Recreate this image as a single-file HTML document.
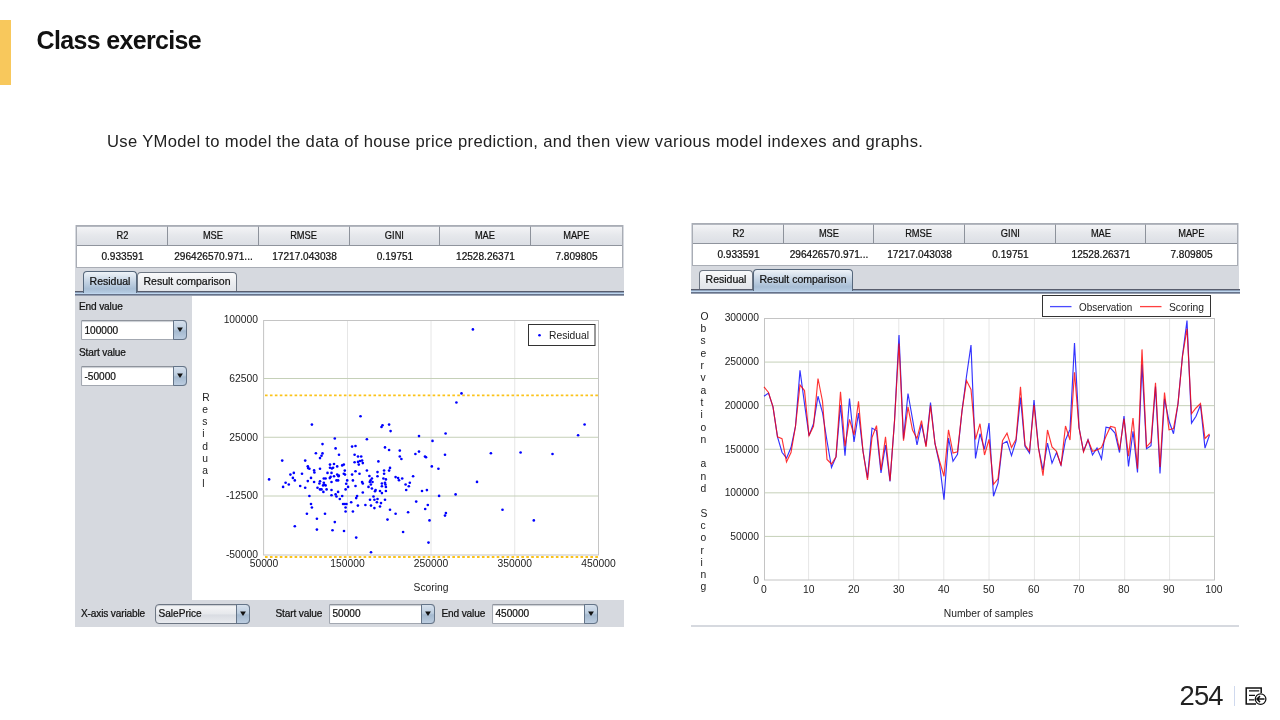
<!DOCTYPE html><html><head><meta charset="utf-8"><title>Class exercise</title><style>
*{box-sizing:border-box;margin:0;padding:0}
html,body{width:1280px;height:720px;overflow:hidden;background:#fff}
body{will-change:transform;position:relative;font-family:"Liberation Sans",sans-serif;color:#000}
.abs{position:absolute}
.vt{width:1px;font-size:10.3px;line-height:12.3px;white-space:break-spaces;word-break:break-all;line-break:anywhere;color:#222}
.bar{left:0;top:20px;width:11px;height:65px;background:#f8c85c}
.title{left:36.5px;top:23.5px;font-weight:bold;font-size:25px;line-height:32px;white-space:nowrap;color:#111;letter-spacing:-0.66px;word-spacing:0px}
.body{left:107px;top:131px;font-size:16.6px;line-height:22px;white-space:nowrap;color:#222;letter-spacing:0.333px}
.pnum{left:1179.5px;top:680.5px;font-size:27.4px;line-height:30px;color:#222;letter-spacing:-0.85px}
.panel{background:#d6d9df}
.lb{letter-spacing:-0.14px}
.sw{font-size:10.1px;line-height:12px;white-space:nowrap;color:#111;-webkit-text-stroke:0.22px #111}
.th{background:linear-gradient(#f3f4f6,#e6e8ec 45%,#dcdfe5);border-top:1px solid #b4b8c0;border-bottom:1px solid #8f949d;text-align:center;height:20px;padding-top:3px}
.td{background:#fff;text-align:center;height:21px;padding-top:4.5px}
.tab{font-size:10.5px;height:20px;border:1px solid #6d7683;border-bottom:none;border-radius:4px 4px 0 0;padding-top:4px;text-align:center;background:linear-gradient(#fafafb,#eceef1 50%,#e1e4e9)}
.tab.sel{background:linear-gradient(#eef3f8,#c5d4e4 45%,#a8bed5 80%,#b6cce3);border-color:#56677b;height:22px}
.combo{height:20px;border:1px solid #a3a8b1;border-top-color:#8e939c;border-radius:1px 4px 4px 1px;background:#fff;padding:3.5px 0 0 2.5px;box-shadow:inset 0 1px 1px #c8ccd2}
.cbtn{width:14px;height:20px;border:1px solid #647488;border-radius:0 4px 4px 0;background:linear-gradient(#d6e0ec,#bccddf 45%,#a4b9cf 55%,#bccde0)}
.combo.ne{background:linear-gradient(#f6f7f8,#e6e8ec 50%,#d9dce2 55%,#e8eaee);border-color:#6d7683;border-radius:4px}
</style></head><body>
<div class="abs bar"></div>
<div class="abs title">Class exercise</div>
<div class="abs body">Use YModel to model the data of house price prediction, and then view various model indexes and graphs.</div>
<div class="abs panel" style="left:75px;top:225px;width:549px;height:402px"></div>
<div class="abs" style="left:76px;top:225px;width:547px;height:43px;border:1px solid #a9adb5;background:#fff"></div>
<div class="abs sw th" style="left:77px;top:226px;width:91px;border-right:1px solid #8d929b;"><span style="display:inline-block;transform:scaleX(0.92)">R2</span></div>
<div class="abs sw td" style="left:77px;top:246px;width:91px">0.933591</div>
<div class="abs sw th" style="left:168px;top:226px;width:91px;border-right:1px solid #8d929b;"><span style="display:inline-block;transform:scaleX(0.92)">MSE</span></div>
<div class="abs sw td" style="left:168px;top:246px;width:91px">296426570.971...</div>
<div class="abs sw th" style="left:259px;top:226px;width:91px;border-right:1px solid #8d929b;"><span style="display:inline-block;transform:scaleX(0.92)">RMSE</span></div>
<div class="abs sw td" style="left:259px;top:246px;width:91px">17217.043038</div>
<div class="abs sw th" style="left:350px;top:226px;width:90px;border-right:1px solid #8d929b;"><span style="display:inline-block;transform:scaleX(0.92)">GINI</span></div>
<div class="abs sw td" style="left:350px;top:246px;width:90px">0.19751</div>
<div class="abs sw th" style="left:440px;top:226px;width:91px;border-right:1px solid #8d929b;"><span style="display:inline-block;transform:scaleX(0.92)">MAE</span></div>
<div class="abs sw td" style="left:440px;top:246px;width:91px">12528.26371</div>
<div class="abs sw th" style="left:531px;top:226px;width:91px;"><span style="display:inline-block;transform:scaleX(0.92)">MAPE</span></div>
<div class="abs sw td" style="left:531px;top:246px;width:91px">7.809805</div>
<div class="abs" style="left:75px;top:291px;width:549px;height:1px;background:#585d6d"></div>
<div class="abs" style="left:75px;top:292px;width:549px;height:1px;background:#8c9fb9"></div>
<div class="abs" style="left:75px;top:293px;width:549px;height:1px;background:#bfd6ee"></div>
<div class="abs" style="left:75px;top:294px;width:549px;height:1px;background:#66728a"></div>
<div class="abs" style="left:75px;top:295px;width:549px;height:1px;background:#969fb0"></div>
<div class="abs sw tab sel" style="left:83px;top:271px;width:54px;height:22px;padding-top:3.2px">Residual</div>
<div class="abs sw tab" style="left:137px;top:272px;width:100px;height:19px;padding-top:2.2px">Result comparison</div>
<div class="abs" style="left:192px;top:296px;width:432px;height:304px;background:#fff"></div>
<div class="abs sw lb" style="left:79px;top:301.2px">End value</div>
<div class="abs sw combo" style="left:81px;top:320px;width:106px;">100000</div><div class="abs cbtn" style="left:173px;top:320px"></div>
<div class="abs sw lb" style="left:79px;top:347.2px">Start value</div>
<div class="abs sw combo" style="left:81px;top:366px;width:106px;">-50000</div><div class="abs cbtn" style="left:173px;top:366px"></div>
<div class="abs sw lb" style="left:81px;top:608.2px">X-axis variable</div>
<div class="abs sw combo ne" style="left:155px;top:604px;width:95px;padding-top:2.8px;">SalePrice</div><div class="abs cbtn" style="left:236px;top:604px"></div>
<div class="abs sw lb" style="left:275.5px;top:608.2px">Start value</div>
<div class="abs sw combo" style="left:329px;top:604px;width:106px;padding-top:2.8px;">50000</div><div class="abs cbtn" style="left:421px;top:604px"></div>
<div class="abs sw lb" style="left:441.5px;top:608.2px">End value</div>
<div class="abs sw combo" style="left:492px;top:604px;width:106px;padding-top:2.8px;">450000</div><div class="abs cbtn" style="left:584px;top:604px"></div>
<div class="abs panel" style="left:691px;top:223px;width:548px;height:70px"></div>
<div class="abs" style="left:691px;top:625px;width:548px;height:2px;background:#d6d9df"></div>
<div class="abs" style="left:692px;top:223px;width:546px;height:43px;border:1px solid #a9adb5;background:#fff"></div>
<div class="abs sw th" style="left:693px;top:224px;width:91px;border-right:1px solid #8d929b;"><span style="display:inline-block;transform:scaleX(0.92)">R2</span></div>
<div class="abs sw td" style="left:693px;top:244px;width:91px">0.933591</div>
<div class="abs sw th" style="left:784px;top:224px;width:90px;border-right:1px solid #8d929b;"><span style="display:inline-block;transform:scaleX(0.92)">MSE</span></div>
<div class="abs sw td" style="left:784px;top:244px;width:90px">296426570.971...</div>
<div class="abs sw th" style="left:874px;top:224px;width:91px;border-right:1px solid #8d929b;"><span style="display:inline-block;transform:scaleX(0.92)">RMSE</span></div>
<div class="abs sw td" style="left:874px;top:244px;width:91px">17217.043038</div>
<div class="abs sw th" style="left:965px;top:224px;width:91px;border-right:1px solid #8d929b;"><span style="display:inline-block;transform:scaleX(0.92)">GINI</span></div>
<div class="abs sw td" style="left:965px;top:244px;width:91px">0.19751</div>
<div class="abs sw th" style="left:1056px;top:224px;width:90px;border-right:1px solid #8d929b;"><span style="display:inline-block;transform:scaleX(0.92)">MAE</span></div>
<div class="abs sw td" style="left:1056px;top:244px;width:90px">12528.26371</div>
<div class="abs sw th" style="left:1146px;top:224px;width:91px;"><span style="display:inline-block;transform:scaleX(0.92)">MAPE</span></div>
<div class="abs sw td" style="left:1146px;top:244px;width:91px">7.809805</div>
<div class="abs" style="left:691px;top:289px;width:549px;height:1px;background:#585d6d"></div>
<div class="abs" style="left:691px;top:290px;width:549px;height:1px;background:#8c9fb9"></div>
<div class="abs" style="left:691px;top:291px;width:549px;height:1px;background:#bfd6ee"></div>
<div class="abs" style="left:691px;top:292px;width:549px;height:1px;background:#66728a"></div>
<div class="abs" style="left:691px;top:293px;width:549px;height:1px;background:#969fb0"></div>
<div class="abs sw tab" style="left:699px;top:270px;width:54px;height:19px;padding-top:2.2px">Residual</div>
<div class="abs sw tab sel" style="left:753px;top:269px;width:100px;height:22px;padding-top:3.2px">Result comparison</div>
<svg class="abs" style="left:0;top:0" width="1280" height="720" viewBox="0 0 1280 720" font-family="Liberation Sans, sans-serif" font-size="10.3" fill="#222">
<line x1="347.5" y1="320.5" x2="347.5" y2="555" stroke="#e6e6e6" stroke-width="1"/>
<line x1="431" y1="320.5" x2="431" y2="555" stroke="#e6e6e6" stroke-width="1"/>
<line x1="514.75" y1="320.5" x2="514.75" y2="555" stroke="#e6e6e6" stroke-width="1"/>
<line x1="263.6" y1="378.5" x2="598.5" y2="378.5" stroke="#c5d0b8" stroke-width="1"/>
<line x1="263.6" y1="437.25" x2="598.5" y2="437.25" stroke="#c5d0b8" stroke-width="1"/>
<line x1="263.6" y1="496" x2="598.5" y2="496" stroke="#c5d0b8" stroke-width="1"/>
<rect x="263.6" y="320.5" width="334.9" height="234.5" fill="none" stroke="#c4c4c4" stroke-width="1"/>
<text x="258" y="323.0" text-anchor="end">100000</text>
<text x="258" y="381.8" text-anchor="end">62500</text>
<text x="258" y="440.6" text-anchor="end">25000</text>
<text x="258" y="499.3" text-anchor="end">-12500</text>
<text x="258" y="558.1" text-anchor="end">-50000</text>
<text x="264" y="567" text-anchor="middle">50000</text>
<text x="347.5" y="567" text-anchor="middle">150000</text>
<text x="431" y="567" text-anchor="middle">250000</text>
<text x="514.75" y="567" text-anchor="middle">350000</text>
<text x="598.5" y="567" text-anchor="middle">450000</text>
<text x="431" y="590.5" text-anchor="middle">Scoring</text>
<line x1="265" y1="395.4" x2="598.5" y2="395.4" stroke="#fbc31a" stroke-width="1.8" stroke-dasharray="2.6 2.33" stroke-linecap="butt"/>
<line x1="265" y1="557" x2="598.5" y2="557" stroke="#fbc31a" stroke-width="1.8" stroke-dasharray="2.6 2.33" stroke-linecap="butt"/>
<g fill="#0000ff">
<circle cx="360.5" cy="416.2" r="1.32"/>
<circle cx="311.9" cy="424.6" r="1.32"/>
<circle cx="382.5" cy="425.2" r="1.32"/>
<circle cx="381.5" cy="427.0" r="1.32"/>
<circle cx="389.1" cy="424.6" r="1.32"/>
<circle cx="390.6" cy="431.1" r="1.32"/>
<circle cx="419.0" cy="436.1" r="1.32"/>
<circle cx="334.8" cy="438.5" r="1.32"/>
<circle cx="366.9" cy="439.2" r="1.32"/>
<circle cx="322.5" cy="444.1" r="1.32"/>
<circle cx="352.1" cy="446.6" r="1.32"/>
<circle cx="355.5" cy="446.0" r="1.32"/>
<circle cx="335.6" cy="448.4" r="1.32"/>
<circle cx="385.0" cy="447.4" r="1.32"/>
<circle cx="389.1" cy="450.0" r="1.32"/>
<circle cx="399.8" cy="450.6" r="1.32"/>
<circle cx="419.0" cy="451.6" r="1.32"/>
<circle cx="415.4" cy="454.0" r="1.32"/>
<circle cx="315.9" cy="453.2" r="1.32"/>
<circle cx="322.5" cy="453.4" r="1.32"/>
<circle cx="321.5" cy="455.8" r="1.32"/>
<circle cx="320.0" cy="458.1" r="1.32"/>
<circle cx="339.0" cy="454.8" r="1.32"/>
<circle cx="354.6" cy="454.8" r="1.32"/>
<circle cx="358.0" cy="456.5" r="1.32"/>
<circle cx="361.2" cy="456.5" r="1.32"/>
<circle cx="399.8" cy="456.5" r="1.32"/>
<circle cx="401.4" cy="459.0" r="1.32"/>
<circle cx="282.2" cy="460.6" r="1.32"/>
<circle cx="305.2" cy="460.6" r="1.32"/>
<circle cx="354.6" cy="462.2" r="1.32"/>
<circle cx="358.0" cy="461.9" r="1.32"/>
<circle cx="360.0" cy="461.0" r="1.32"/>
<circle cx="362.1" cy="460.6" r="1.32"/>
<circle cx="362.8" cy="463.1" r="1.32"/>
<circle cx="358.8" cy="464.6" r="1.32"/>
<circle cx="378.4" cy="461.4" r="1.32"/>
<circle cx="330.0" cy="464.6" r="1.32"/>
<circle cx="334.0" cy="464.0" r="1.32"/>
<circle cx="337.2" cy="466.4" r="1.32"/>
<circle cx="342.2" cy="465.4" r="1.32"/>
<circle cx="343.8" cy="464.6" r="1.32"/>
<circle cx="307.8" cy="466.2" r="1.32"/>
<circle cx="308.1" cy="468.1" r="1.32"/>
<circle cx="309.4" cy="468.8" r="1.32"/>
<circle cx="330.0" cy="467.8" r="1.32"/>
<circle cx="331.9" cy="468.5" r="1.32"/>
<circle cx="333.1" cy="467.8" r="1.32"/>
<circle cx="320.0" cy="468.8" r="1.32"/>
<circle cx="314.1" cy="470.4" r="1.32"/>
<circle cx="314.4" cy="472.5" r="1.32"/>
<circle cx="390.0" cy="467.9" r="1.32"/>
<circle cx="389.1" cy="470.6" r="1.32"/>
<circle cx="384.1" cy="470.5" r="1.32"/>
<circle cx="366.9" cy="470.5" r="1.32"/>
<circle cx="355.5" cy="471.2" r="1.32"/>
<circle cx="344.8" cy="470.6" r="1.32"/>
<circle cx="293.8" cy="472.9" r="1.32"/>
<circle cx="290.4" cy="474.6" r="1.32"/>
<circle cx="302.0" cy="473.8" r="1.32"/>
<circle cx="327.5" cy="472.9" r="1.32"/>
<circle cx="331.5" cy="472.9" r="1.32"/>
<circle cx="337.2" cy="474.6" r="1.32"/>
<circle cx="338.8" cy="475.6" r="1.32"/>
<circle cx="338.5" cy="476.2" r="1.32"/>
<circle cx="343.8" cy="473.8" r="1.32"/>
<circle cx="345.0" cy="474.6" r="1.32"/>
<circle cx="352.1" cy="474.6" r="1.32"/>
<circle cx="359.5" cy="473.8" r="1.32"/>
<circle cx="377.5" cy="472.1" r="1.32"/>
<circle cx="384.1" cy="473.8" r="1.32"/>
<circle cx="369.4" cy="476.0" r="1.32"/>
<circle cx="377.5" cy="476.2" r="1.32"/>
<circle cx="413.1" cy="476.2" r="1.32"/>
<circle cx="269.1" cy="479.4" r="1.32"/>
<circle cx="292.9" cy="477.9" r="1.32"/>
<circle cx="294.8" cy="480.4" r="1.32"/>
<circle cx="311.0" cy="477.9" r="1.32"/>
<circle cx="330.6" cy="476.9" r="1.32"/>
<circle cx="334.0" cy="476.2" r="1.32"/>
<circle cx="329.8" cy="478.1" r="1.32"/>
<circle cx="323.8" cy="478.5" r="1.32"/>
<circle cx="325.6" cy="478.5" r="1.32"/>
<circle cx="395.6" cy="477.1" r="1.32"/>
<circle cx="398.1" cy="478.1" r="1.32"/>
<circle cx="399.0" cy="480.2" r="1.32"/>
<circle cx="402.2" cy="478.5" r="1.32"/>
<circle cx="383.4" cy="478.5" r="1.32"/>
<circle cx="385.9" cy="479.4" r="1.32"/>
<circle cx="371.9" cy="478.5" r="1.32"/>
<circle cx="370.6" cy="480.2" r="1.32"/>
<circle cx="285.6" cy="482.8" r="1.32"/>
<circle cx="288.8" cy="484.5" r="1.32"/>
<circle cx="283.1" cy="486.9" r="1.32"/>
<circle cx="307.8" cy="481.1" r="1.32"/>
<circle cx="314.1" cy="482.0" r="1.32"/>
<circle cx="320.0" cy="481.2" r="1.32"/>
<circle cx="319.4" cy="483.5" r="1.32"/>
<circle cx="323.8" cy="482.8" r="1.32"/>
<circle cx="324.4" cy="484.8" r="1.32"/>
<circle cx="325.6" cy="485.4" r="1.32"/>
<circle cx="323.1" cy="485.4" r="1.32"/>
<circle cx="331.5" cy="482.0" r="1.32"/>
<circle cx="336.5" cy="480.4" r="1.32"/>
<circle cx="338.1" cy="480.4" r="1.32"/>
<circle cx="347.2" cy="480.4" r="1.32"/>
<circle cx="346.2" cy="483.8" r="1.32"/>
<circle cx="352.9" cy="480.4" r="1.32"/>
<circle cx="362.1" cy="482.0" r="1.32"/>
<circle cx="362.8" cy="483.5" r="1.32"/>
<circle cx="369.8" cy="481.9" r="1.32"/>
<circle cx="372.5" cy="482.0" r="1.32"/>
<circle cx="370.9" cy="484.5" r="1.32"/>
<circle cx="381.9" cy="483.5" r="1.32"/>
<circle cx="385.0" cy="482.8" r="1.32"/>
<circle cx="385.4" cy="484.5" r="1.32"/>
<circle cx="385.9" cy="486.9" r="1.32"/>
<circle cx="381.9" cy="486.2" r="1.32"/>
<circle cx="409.8" cy="482.8" r="1.32"/>
<circle cx="405.6" cy="484.5" r="1.32"/>
<circle cx="408.8" cy="486.2" r="1.32"/>
<circle cx="300.2" cy="486.0" r="1.32"/>
<circle cx="305.2" cy="487.8" r="1.32"/>
<circle cx="317.5" cy="487.8" r="1.32"/>
<circle cx="320.0" cy="489.4" r="1.32"/>
<circle cx="321.5" cy="489.4" r="1.32"/>
<circle cx="323.4" cy="491.9" r="1.32"/>
<circle cx="326.6" cy="489.4" r="1.32"/>
<circle cx="331.5" cy="490.0" r="1.32"/>
<circle cx="338.1" cy="491.9" r="1.32"/>
<circle cx="345.6" cy="489.4" r="1.32"/>
<circle cx="348.1" cy="486.9" r="1.32"/>
<circle cx="355.5" cy="486.0" r="1.32"/>
<circle cx="368.5" cy="486.9" r="1.32"/>
<circle cx="371.9" cy="488.5" r="1.32"/>
<circle cx="375.6" cy="490.0" r="1.32"/>
<circle cx="375.0" cy="491.2" r="1.32"/>
<circle cx="380.0" cy="491.0" r="1.32"/>
<circle cx="381.9" cy="493.1" r="1.32"/>
<circle cx="385.9" cy="491.0" r="1.32"/>
<circle cx="406.2" cy="490.0" r="1.32"/>
<circle cx="362.8" cy="492.5" r="1.32"/>
<circle cx="309.4" cy="496.0" r="1.32"/>
<circle cx="331.5" cy="495.2" r="1.32"/>
<circle cx="335.6" cy="494.4" r="1.32"/>
<circle cx="336.5" cy="496.5" r="1.32"/>
<circle cx="342.2" cy="496.0" r="1.32"/>
<circle cx="339.8" cy="499.0" r="1.32"/>
<circle cx="357.1" cy="496.0" r="1.32"/>
<circle cx="356.2" cy="498.1" r="1.32"/>
<circle cx="373.5" cy="496.5" r="1.32"/>
<circle cx="370.0" cy="499.8" r="1.32"/>
<circle cx="374.4" cy="499.8" r="1.32"/>
<circle cx="377.5" cy="499.0" r="1.32"/>
<circle cx="385.0" cy="499.8" r="1.32"/>
<circle cx="416.2" cy="501.6" r="1.32"/>
<circle cx="376.9" cy="502.2" r="1.32"/>
<circle cx="381.0" cy="503.1" r="1.32"/>
<circle cx="380.0" cy="506.5" r="1.32"/>
<circle cx="374.4" cy="508.1" r="1.32"/>
<circle cx="371.0" cy="505.6" r="1.32"/>
<circle cx="365.4" cy="505.0" r="1.32"/>
<circle cx="357.9" cy="505.6" r="1.32"/>
<circle cx="351.2" cy="502.2" r="1.32"/>
<circle cx="343.1" cy="504.0" r="1.32"/>
<circle cx="344.8" cy="504.0" r="1.32"/>
<circle cx="346.5" cy="504.0" r="1.32"/>
<circle cx="345.6" cy="507.5" r="1.32"/>
<circle cx="345.6" cy="511.5" r="1.32"/>
<circle cx="352.9" cy="511.5" r="1.32"/>
<circle cx="311.0" cy="504.0" r="1.32"/>
<circle cx="311.9" cy="507.5" r="1.32"/>
<circle cx="306.9" cy="513.8" r="1.32"/>
<circle cx="325.0" cy="513.8" r="1.32"/>
<circle cx="316.9" cy="518.8" r="1.32"/>
<circle cx="334.8" cy="522.1" r="1.32"/>
<circle cx="294.8" cy="526.2" r="1.32"/>
<circle cx="316.9" cy="529.6" r="1.32"/>
<circle cx="332.5" cy="530.2" r="1.32"/>
<circle cx="344.0" cy="531.0" r="1.32"/>
<circle cx="356.2" cy="537.6" r="1.32"/>
<circle cx="371.0" cy="552.2" r="1.32"/>
<circle cx="390.0" cy="509.8" r="1.32"/>
<circle cx="395.6" cy="513.8" r="1.32"/>
<circle cx="408.1" cy="512.2" r="1.32"/>
<circle cx="387.5" cy="519.6" r="1.32"/>
<circle cx="403.1" cy="532.0" r="1.32"/>
<circle cx="445.6" cy="433.5" r="1.32"/>
<circle cx="432.5" cy="440.9" r="1.32"/>
<circle cx="425.0" cy="456.5" r="1.32"/>
<circle cx="426.0" cy="457.2" r="1.32"/>
<circle cx="445.0" cy="454.8" r="1.32"/>
<circle cx="490.9" cy="453.2" r="1.32"/>
<circle cx="520.6" cy="452.5" r="1.32"/>
<circle cx="552.5" cy="454.0" r="1.32"/>
<circle cx="578.1" cy="435.2" r="1.32"/>
<circle cx="431.8" cy="466.4" r="1.32"/>
<circle cx="438.4" cy="468.8" r="1.32"/>
<circle cx="477.0" cy="481.9" r="1.32"/>
<circle cx="422.0" cy="491.0" r="1.32"/>
<circle cx="426.9" cy="490.1" r="1.32"/>
<circle cx="439.1" cy="495.9" r="1.32"/>
<circle cx="455.6" cy="494.4" r="1.32"/>
<circle cx="427.8" cy="505.0" r="1.32"/>
<circle cx="425.2" cy="509.0" r="1.32"/>
<circle cx="445.9" cy="513.1" r="1.32"/>
<circle cx="445.0" cy="515.6" r="1.32"/>
<circle cx="429.5" cy="520.4" r="1.32"/>
<circle cx="428.5" cy="542.6" r="1.32"/>
<circle cx="502.5" cy="509.8" r="1.32"/>
<circle cx="533.8" cy="520.4" r="1.32"/>
<circle cx="472.9" cy="329.4" r="1.32"/>
<circle cx="461.5" cy="393.4" r="1.32"/>
<circle cx="456.4" cy="402.5" r="1.32"/>
<circle cx="584.6" cy="424.5" r="1.32"/>
</g>
<rect x="528.5" y="324.5" width="66.5" height="21" fill="#fff" stroke="#333" stroke-width="1"/>
<circle cx="539.5" cy="335.3" r="1.3" fill="#0000ff"/>
<text x="549" y="339">Residual</text>
<line x1="808.6" y1="318.5" x2="808.6" y2="580" stroke="#e6e6e6" stroke-width="1"/>
<line x1="853.6" y1="318.5" x2="853.6" y2="580" stroke="#e6e6e6" stroke-width="1"/>
<line x1="898.8" y1="318.5" x2="898.8" y2="580" stroke="#e6e6e6" stroke-width="1"/>
<line x1="943.8" y1="318.5" x2="943.8" y2="580" stroke="#e6e6e6" stroke-width="1"/>
<line x1="989" y1="318.5" x2="989" y2="580" stroke="#e6e6e6" stroke-width="1"/>
<line x1="1034.4" y1="318.5" x2="1034.4" y2="580" stroke="#e6e6e6" stroke-width="1"/>
<line x1="1079.5" y1="318.5" x2="1079.5" y2="580" stroke="#e6e6e6" stroke-width="1"/>
<line x1="1124.7" y1="318.5" x2="1124.7" y2="580" stroke="#e6e6e6" stroke-width="1"/>
<line x1="1169.6" y1="318.5" x2="1169.6" y2="580" stroke="#e6e6e6" stroke-width="1"/>
<line x1="764.5" y1="362.08" x2="1214.5" y2="362.08" stroke="#c5d0b8" stroke-width="1"/>
<line x1="764.5" y1="405.67" x2="1214.5" y2="405.67" stroke="#c5d0b8" stroke-width="1"/>
<line x1="764.5" y1="449.25" x2="1214.5" y2="449.25" stroke="#c5d0b8" stroke-width="1"/>
<line x1="764.5" y1="492.83" x2="1214.5" y2="492.83" stroke="#c5d0b8" stroke-width="1"/>
<line x1="764.5" y1="536.42" x2="1214.5" y2="536.42" stroke="#c5d0b8" stroke-width="1"/>
<rect x="764.5" y="318.5" width="450.0" height="261.5" fill="none" stroke="#c4c4c4" stroke-width="1"/>
<text x="759" y="321.3" text-anchor="end">300000</text>
<text x="759" y="365.0" text-anchor="end">250000</text>
<text x="759" y="408.7" text-anchor="end">200000</text>
<text x="759" y="452.5" text-anchor="end">150000</text>
<text x="759" y="496.2" text-anchor="end">100000</text>
<text x="759" y="539.9" text-anchor="end">50000</text>
<text x="759" y="583.6" text-anchor="end">0</text>
<text x="763.8" y="592.5" text-anchor="middle">0</text>
<text x="808.8" y="592.5" text-anchor="middle">10</text>
<text x="853.8" y="592.5" text-anchor="middle">20</text>
<text x="898.8" y="592.5" text-anchor="middle">30</text>
<text x="943.8" y="592.5" text-anchor="middle">40</text>
<text x="988.8" y="592.5" text-anchor="middle">50</text>
<text x="1033.8" y="592.5" text-anchor="middle">60</text>
<text x="1078.8" y="592.5" text-anchor="middle">70</text>
<text x="1123.8" y="592.5" text-anchor="middle">80</text>
<text x="1168.8" y="592.5" text-anchor="middle">90</text>
<text x="1213.8" y="592.5" text-anchor="middle">100</text>
<text x="988.5" y="616.7" text-anchor="middle">Number of samples</text>
<polyline points="764.00,396.25 768.50,393.1 773.00,406.9 777.50,436.9 782.00,452.25 786.50,458.1 791.00,447.5 795.50,426.25 800.00,370.4 804.50,403.75 809.00,435.6 813.50,423.75 818.00,396.25 822.50,412.5 827.00,441 831.50,467.5 836.00,456.9 840.50,405 845.00,455.6 849.50,398.5 854.00,441.9 858.50,413.1 863.00,451.25 867.50,478 872.00,428.1 876.50,430.6 881.00,473 885.50,445 890.00,481.5 894.50,421.25 899.00,335 903.50,438.75 908.00,393.5 912.50,419 917.00,445 921.50,424.4 926.00,445.6 930.50,402.5 935.00,443.75 939.50,463.75 944.00,499.75 948.50,438.1 953.00,461.25 957.50,454.4 962.00,411 966.50,376.25 971.00,345 975.50,458.4 980.00,433.75 984.50,449.4 989.00,423.1 993.50,496.25 998.00,483.1 1002.50,443.75 1007.00,441.25 1011.50,455.6 1016.00,441.25 1020.50,397.5 1025.00,446.25 1029.50,453.1 1034.00,400 1038.50,448 1043.00,470 1047.50,443.1 1052.00,463.1 1056.50,452.5 1061.00,465 1065.50,440 1070.00,429.4 1074.50,343.1 1079.00,427.5 1083.50,451.25 1088.00,439.75 1092.50,455 1097.00,448.1 1101.50,459 1106.00,427.25 1110.50,428.1 1115.00,433.1 1119.50,452.5 1124.00,416 1128.50,466.4 1133.00,431.25 1137.50,472.5 1142.00,364.4 1146.50,448.75 1151.00,445.6 1155.50,386.5 1160.00,473.5 1164.50,398.75 1169.00,421 1173.50,433.75 1178.00,403.75 1182.50,355.5 1187.00,320.6 1191.50,423.1 1196.00,416.25 1200.50,405 1205.00,448.1 1209.50,435" fill="none" stroke="#0000ff" stroke-width="1.15" stroke-opacity="0.8" stroke-linejoin="miter"/>
<polyline points="764.00,386.9 768.50,392.5 773.00,406.9 777.50,436.9 782.00,438.75 786.50,461.9 791.00,452.5 795.50,426.25 800.00,385 804.50,390.6 809.00,435.6 813.50,426.25 818.00,378.5 822.50,401.25 827.00,459.4 831.50,464 836.00,456.9 840.50,391.9 845.00,446.25 849.50,419.4 854.00,435 858.50,401.25 863.00,451.25 867.50,480 872.00,437.5 876.50,425.6 881.00,470 885.50,436.9 890.00,480.6 894.50,421.25 899.00,343.5 903.50,440.6 908.00,406.9 912.50,430 917.00,438.5 921.50,420.6 926.00,446.9 930.50,405.6 935.00,443.75 939.50,461 944.00,476.25 948.50,429.75 953.00,453.1 957.50,451.9 962.00,411 966.50,380.6 971.00,389.4 975.50,439.4 980.00,423.75 984.50,455 989.00,439.4 993.50,484.4 998.00,478.75 1002.50,440.6 1007.00,433.1 1011.50,447.5 1016.00,439.4 1020.50,386.9 1025.00,445 1029.50,451.25 1034.00,405 1038.50,448 1043.00,475.6 1047.50,430 1052.00,446.9 1056.50,451.25 1061.00,465.6 1065.50,426 1070.00,440 1074.50,372.25 1079.00,427.5 1083.50,451.9 1088.00,439.75 1092.50,451.25 1097.00,450 1101.50,447.5 1106.00,436.25 1110.50,426.5 1115.00,427.5 1119.50,450 1124.00,418.75 1128.50,456.25 1133.00,418.1 1137.50,468.75 1142.00,349.4 1146.50,446.9 1151.00,441.9 1155.50,382.8 1160.00,466.9 1164.50,392.5 1169.00,429.75 1173.50,428.5 1178.00,403.75 1182.50,356.25 1187.00,328.75 1191.50,413.75 1196.00,408 1200.50,403.5 1205.00,438.5 1209.50,434" fill="none" stroke="#ff0000" stroke-width="1.15" stroke-opacity="0.8" stroke-linejoin="miter"/>
<rect x="1042.5" y="295.5" width="168" height="21" fill="#fff" stroke="#333" stroke-width="1"/>
<line x1="1050" y1="306.6" x2="1071.5" y2="306.6" stroke="#4a4aff" stroke-width="1.3"/>
<text x="1079" y="310.5" textLength="53.3" lengthAdjust="spacingAndGlyphs">Observation</text>
<line x1="1140" y1="306.6" x2="1161.5" y2="306.6" stroke="#ff4040" stroke-width="1.3"/>
<text x="1169" y="310.5">Scoring</text>
<polygon points="177.10,327.40 182.90,327.40 180.00,332.10" fill="#111"/>
<polygon points="177.10,373.40 182.90,373.40 180.00,378.10" fill="#111"/>
<polygon points="240.10,611.40 245.90,611.40 243.00,616.10" fill="#111"/>
<polygon points="425.10,611.40 430.90,611.40 428.00,616.10" fill="#111"/>
<polygon points="588.10,611.40 593.90,611.40 591.00,616.10" fill="#111"/>
</svg>
<div class="abs vt" style="left:202.2px;top:391.6px">Residual</div>
<div class="abs vt" style="left:700.6px;top:310.9px">Observation and Scoring</div>
<div class="abs pnum">254</div>
<div class="abs" style="left:1234px;top:686px;width:1px;height:20px;background:#cfd9ee"></div>
<svg class="abs" style="left:0;top:0" width="1280" height="720" viewBox="0 0 1280 720" fill="none" stroke="#111" stroke-width="1.5">
<path d="M1261.2 693V687.9H1246.2V703.9H1256"/><path d="M1249 690.8H1259.2M1249 695.4H1255M1249 699.9H1254.4" stroke-width="1.3"/>
<circle cx="1260.6" cy="699.1" r="5.3" fill="#fff" stroke-width="1.25"/><path d="M1264.5 699.1H1257.4M1260 696.1L1257 699.1L1260 702.1" stroke-width="1.5"/></svg>
</body></html>
